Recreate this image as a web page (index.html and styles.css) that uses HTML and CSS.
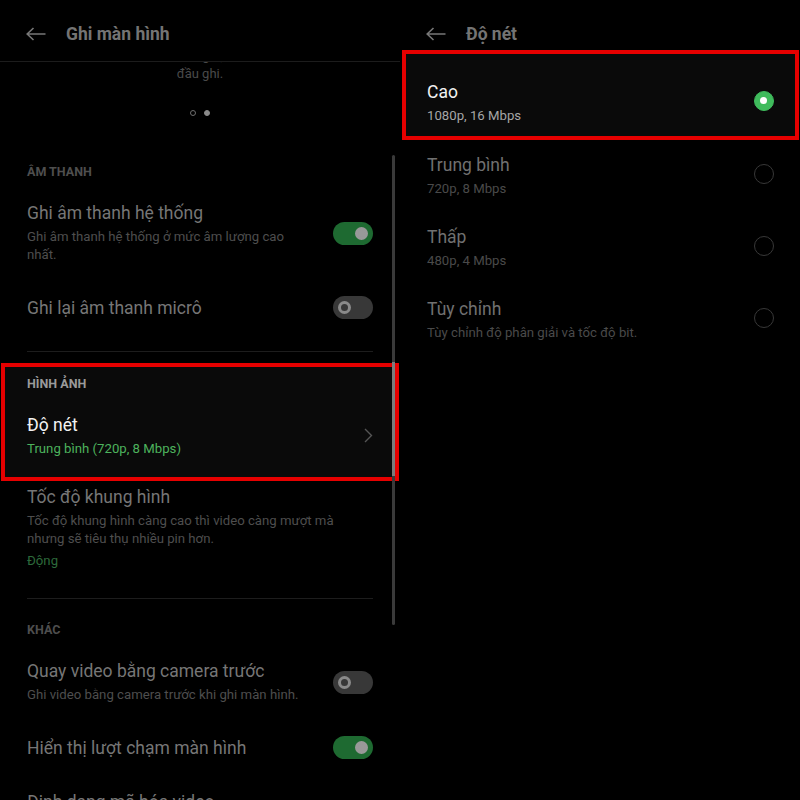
FILE: index.html
```html
<!DOCTYPE html>
<html lang="vi">
<head>
    <meta charset="UTF-8">
    <meta name="viewport" content="width=device-width, initial-scale=1.0">
    <title>Ghi màn hình - Độ nét</title>
    <link rel="stylesheet" href="styles.css">
</head>
<body>
    <div class="screens">
        <!-- Left screen: screen recording settings -->
        <div class="panel">
            <div class="topbar line">
                <svg class="back" width="20" height="14" viewBox="0 0 20 14"><path d="M19.5 7H1.2M7.5 1L1.2 7l6.3 6" fill="none" stroke="currentColor" stroke-width="1.6"/></svg>
                <span class="topbar-title">Ghi màn hình</span>
            </div>
            <div class="page">
                <p class="intro">Màn hình sẽ đếm ngược trước khi bắt<br>đầu ghi.</p>
                <div class="dots">
                    <span class="dot"></span>
                    <span class="dot active"></span>
                </div>

                <div class="label">ÂM THANH</div>
                <div class="row">
                    <div class="row-text">
                        <div class="row-title">Ghi âm thanh hệ thống</div>
                        <div class="row-sub">Ghi âm thanh hệ thống ở mức âm lượng cao nhất.</div>
                    </div>
                    <span class="switch on"></span>
                </div>
                <div class="row">
                    <div class="row-text">
                        <div class="row-title">Ghi lại âm thanh micrô</div>
                    </div>
                    <span class="switch"></span>
                </div>
                <div class="divider"></div>

                <div class="highlight">
                    <div class="label">HÌNH ẢNH</div>
                    <div class="row">
                        <div class="row-text">
                            <div class="row-title">Độ nét</div>
                            <div class="row-value">Trung bình (720p, 8 Mbps)</div>
                        </div>
                        <svg class="chevron" width="9" height="15" viewBox="0 0 9 15"><path d="M1 1l6.5 6.5L1 14" fill="none" stroke="currentColor" stroke-width="1.4"/></svg>
                    </div>
                </div>
                <div class="row after-box">
                    <div class="row-text">
                        <div class="row-title">Tốc độ khung hình</div>
                        <div class="row-sub">Tốc độ khung hình càng cao thì video càng mượt mà nhưng sẽ tiêu thụ nhiều pin hơn.</div>
                        <div class="row-value dim">Động</div>
                    </div>
                </div>
                <div class="divider short"></div>

                <div class="label">KHÁC</div>
                <div class="row">
                    <div class="row-text">
                        <div class="row-title">Quay video bằng camera trước</div>
                        <div class="row-sub">Ghi video bằng camera trước khi ghi màn hình.</div>
                    </div>
                    <span class="switch"></span>
                </div>
                <div class="row">
                    <div class="row-text">
                        <div class="row-title">Hiển thị lượt chạm màn hình</div>
                    </div>
                    <span class="switch on"></span>
                </div>
                <div class="row">
                    <div class="row-text">
                        <div class="row-title">Định dạng mã hóa video</div>
                    </div>
                </div>
            </div>
            <div class="scrollbar"></div>
        </div>

        <!-- Right screen: resolution picker -->
        <div class="panel">
            <div class="topbar short">
                <svg class="back" width="20" height="14" viewBox="0 0 20 14"><path d="M19.5 7H1.2M7.5 1L1.2 7l6.3 6" fill="none" stroke="currentColor" stroke-width="1.6"/></svg>
                <span class="topbar-title">Độ nét</span>
            </div>
            <div class="option selected">
                <div class="row-text">
                    <div class="row-title">Cao</div>
                    <div class="row-sub">1080p, 16 Mbps</div>
                </div>
                <span class="radio checked"></span>
            </div>
            <div class="option">
                <div class="row-text">
                    <div class="row-title">Trung bình</div>
                    <div class="row-sub">720p, 8 Mbps</div>
                </div>
                <span class="radio"></span>
            </div>
            <div class="option">
                <div class="row-text">
                    <div class="row-title">Thấp</div>
                    <div class="row-sub">480p, 4 Mbps</div>
                </div>
                <span class="radio"></span>
            </div>
            <div class="option">
                <div class="row-text">
                    <div class="row-title">Tùy chỉnh</div>
                    <div class="row-sub">Tùy chỉnh độ phân giải và tốc độ bit.</div>
                </div>
                <span class="radio"></span>
            </div>
        </div>
    </div>
</body>
</html>
```

FILE: styles.css
```css
/* Two dark Android settings screens, side by side */
body {
    margin: 0;
    background-color: #000;
    font-family: Roboto, "Noto Sans", sans-serif;
    color: #767676;
}
.screens {
    display: grid;
    grid-template-columns: 400px 400px;
    height: 800px;
    overflow: hidden;
}
.panel {
    position: relative;
    height: 800px;
    overflow: hidden;
}
.topbar {
    display: flex;
    align-items: center;
    gap: 20px;
    height: 62px;
    padding: 6px 0 0 26px;
    box-sizing: border-box;
    color: #777;
}
.topbar.line {
    border-bottom: 1px solid #1c1c1c;
}
.topbar.short {
    height: 50px;
    padding-top: 18px;
}
.topbar-title {
    font-size: 17.5px;
    font-weight: 700;
    color: #747474;
}
.back {
    flex: none;
}
.page {
    overflow: hidden;
    height: 738px;
}
.intro {
    margin: -15px 0 0;
    text-align: center;
    font-size: 13px;
    line-height: 18px;
    color: #4a4a4a;
}
.dots {
    display: flex;
    justify-content: center;
    gap: 8px;
    margin-top: 27px;
}
.dot {
    width: 6px;
    height: 6px;
    border-radius: 50%;
    border: 1px solid #6e6e6e;
    box-sizing: border-box;
}
.dot.active {
    background-color: #8a8a8a;
    border-color: #8a8a8a;
}
.label {
    margin-top: 48px;
    padding: 0 27px;
    font-size: 12.5px;
    font-weight: 700;
    line-height: 16px;
    color: #4e4e4e;
}
.divider + .label {
    margin-top: 23px;
}
.row {
    display: flex;
    align-items: center;
    gap: 26px;
    margin-top: 32px;
    padding: 0 27px;
}
.label + .row {
    margin-top: 22px;
}
.row.after-box {
    margin-top: 5px;
}
.row-text {
    flex: 1;
    min-width: 0;
    max-width: 325px;
}
.row-title {
    font-size: 17.5px;
    line-height: 22px;
    color: #767676;
}
.row-sub {
    margin-top: 4px;
    font-size: 13.2px;
    line-height: 18px;
    color: #4e4e4e;
}
.row-value {
    margin-top: 4px;
    font-size: 13.2px;
    line-height: 18px;
    color: #4db35d;
}
.row-value.dim {
    color: #2d6a3b;
}
.divider {
    height: 1px;
    margin: 32px 27px 0;
    background-color: #1d1d1d;
}
.divider.short {
    margin-top: 28px;
}
.divider + .highlight {
    margin-top: 11px;
}
/* red marker boxes drawn on the screenshot */
.highlight {
    margin: 0 1px;
    padding: 9px 22px 19px;
    border: 4px solid #e60000;
    background-color: #0a0a0a;
}
.highlight .label {
    margin-top: 0;
    padding: 0;
    color: #9a9a9a;
}
.highlight .row {
    padding: 0;
}
.highlight .row-title {
    color: #f2f2f2;
}
.chevron {
    flex: none;
    color: #555;
    margin-bottom: 2px;
}
.switch {
    position: relative;
    flex: none;
    width: 40px;
    height: 23px;
    border-radius: 12px;
    background-color: #383838;
}
.switch::after {
    content: "";
    position: absolute;
    top: 5px;
    left: 5px;
    width: 13px;
    height: 13px;
    border-radius: 50%;
    border: 3px solid #8a8a8a;
    box-sizing: border-box;
}
.switch.on {
    background-color: #1e6a31;
}
.switch.on::after {
    left: 22px;
    background-color: #999;
    border-color: #999;
}
.scrollbar {
    position: absolute;
    left: 392px;
    top: 155px;
    width: 3px;
    height: 470px;
    border-radius: 2px;
    background: linear-gradient(#3a3a3a 207px, #7c7c7c 207px, #7c7c7c 321px, #3a3a3a 321px);
}
.option {
    display: flex;
    align-items: center;
    gap: 20px;
    padding: 14px 26px 14px 27px;
}
.option.selected {
    margin: 0 1px 0 2px;
    padding: 27px 21px 11px;
    border: 4px solid #e60000;
    background-color: #0a0a0a;
}
.option .row-title {
    color: #707070;
}
.option .row-sub {
    color: #4a4a4a;
}
.option.selected .row-title {
    color: #f2f2f2;
}
.option.selected .row-sub {
    color: #a6a6a6;
}
.radio {
    position: relative;
    flex: none;
    width: 20px;
    height: 20px;
    margin-bottom: 4px;
    border-radius: 50%;
    border: 1.5px solid #383838;
    box-sizing: border-box;
}
.radio.checked {
    background-color: #3fbb5c;
    border-color: #3fbb5c;
}
.radio.checked::after {
    content: "";
    position: absolute;
    top: 5px;
    left: 5px;
    width: 7px;
    height: 7px;
    border-radius: 50%;
    background-color: #fff;
}
```
